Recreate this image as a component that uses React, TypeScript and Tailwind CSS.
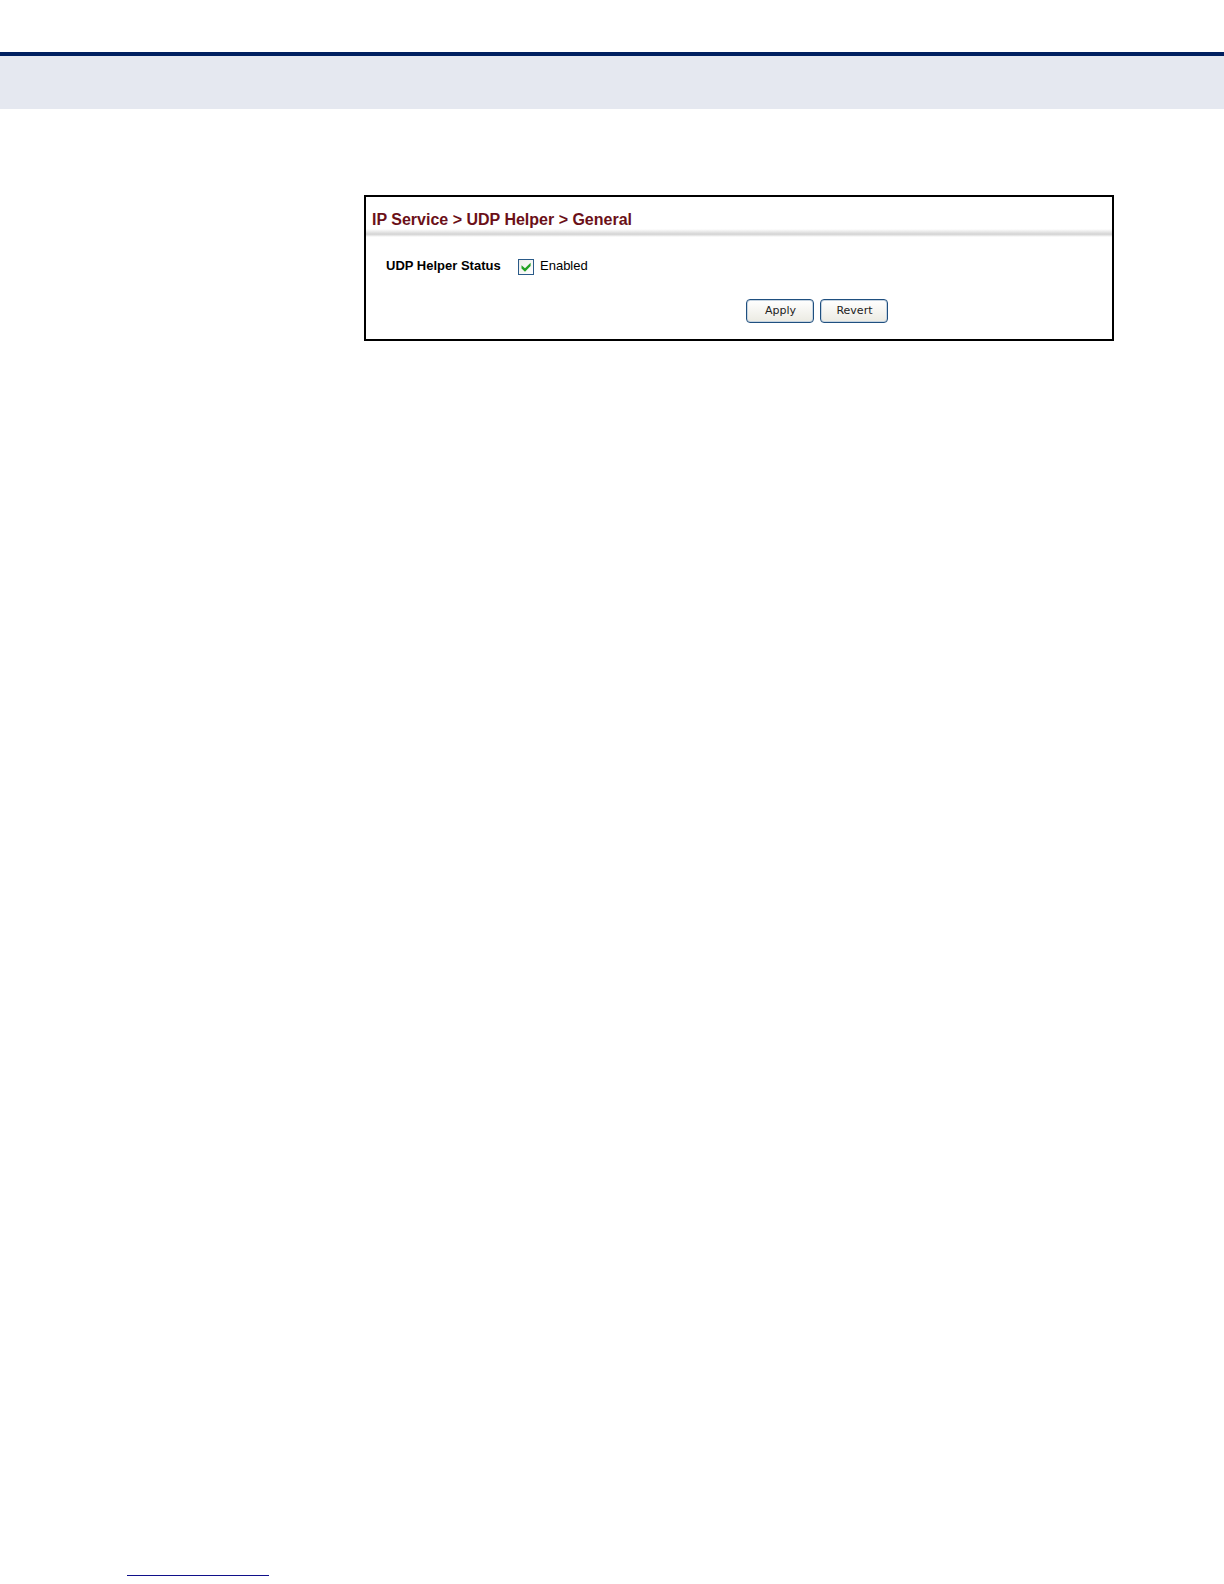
import { useState } from 'react';

export default function App() {
  return (
    <div className="flex min-h-screen flex-col bg-white font-['Liberation_Sans',Arial,sans-serif] text-black">
      <header className="mt-[52px] h-[57px] border-t-4 border-[#002060] bg-[#e5e8f0]" />
      <main className="mt-[86px] mr-[110px] ml-[364px]">
        <UdpHelperPanel />
      </main>
      <footer className="mt-auto pb-2 pl-[127px]">
        <hr className="w-[142px] border-t border-[#10108a]" />
      </footer>
    </div>
  );
}

function UdpHelperPanel() {
  const [saved, setSaved] = useState(true);
  const [enabled, setEnabled] = useState(true);

  return (
    <section className="border-2 border-black pb-4">
      <h1 className="px-1.5 pt-3.5 text-base leading-[18px] font-bold text-[#6b1018]">
        IP Service &gt; UDP Helper &gt; General
      </h1>
      <div className="h-2 bg-linear-to-b from-white via-[#d3d3d3] via-65% to-white" />

      <form
        onSubmit={(e) => {
          e.preventDefault();
          setSaved(enabled);
        }}
      >
        <div className="mt-5 flex h-5 items-start pl-5 text-[13px] leading-[18px]">
          <span id="udp-status" className="w-[132px] shrink-0 font-bold">
            UDP Helper Status
          </span>
          <label className="flex items-start gap-1.5">
            <StatusCheckbox checked={enabled} onChange={setEnabled} />
            Enabled
          </label>
        </div>

        <div className="mt-[22px] flex gap-1.5 pl-[51%]">
          <XpButton type="submit">Apply</XpButton>
          <XpButton type="button" onClick={() => setEnabled(saved)}>
            Revert
          </XpButton>
        </div>
      </form>
    </section>
  );
}

function StatusCheckbox({
  checked,
  onChange,
}: {
  checked: boolean;
  onChange: (next: boolean) => void;
}) {
  return (
    <span className="mt-0.5 grid size-4 shrink-0 place-items-center">
      <input
        type="checkbox"
        checked={checked}
        onChange={(e) => onChange(e.target.checked)}
        aria-describedby="udp-status"
        className="col-start-1 row-start-1 size-4 appearance-none border border-[#2a5a88] bg-linear-to-br from-[#ecece8] to-white"
      />
      {checked ? <CheckIcon /> : null}
    </span>
  );
}

function XpButton({
  type,
  onClick,
  children,
}: {
  type: 'submit' | 'button';
  onClick?: () => void;
  children: string;
}) {
  return (
    <button
      type={type}
      onClick={onClick}
      className="h-6 w-[68px] rounded-[4px] border border-[#1f4f7f] bg-linear-to-b from-white to-[#ebeae2] font-['DejaVu_Sans',Verdana,sans-serif] text-[11px] leading-5 text-[#222222] shadow-[inset_0_0_0_1px_#c5d3e0]"
    >
      {children}
    </button>
  );
}

function CheckIcon() {
  return (
    <svg
      width="10"
      height="10"
      viewBox="0 0 10 10"
      fill="#21a121"
      className="pointer-events-none col-start-1 row-start-1"
      aria-hidden
    >
      <path d="M.5 3.2v3.3L4 9.8l5.6-5.7V.8L4 6.2z" />
    </svg>
  );
}
